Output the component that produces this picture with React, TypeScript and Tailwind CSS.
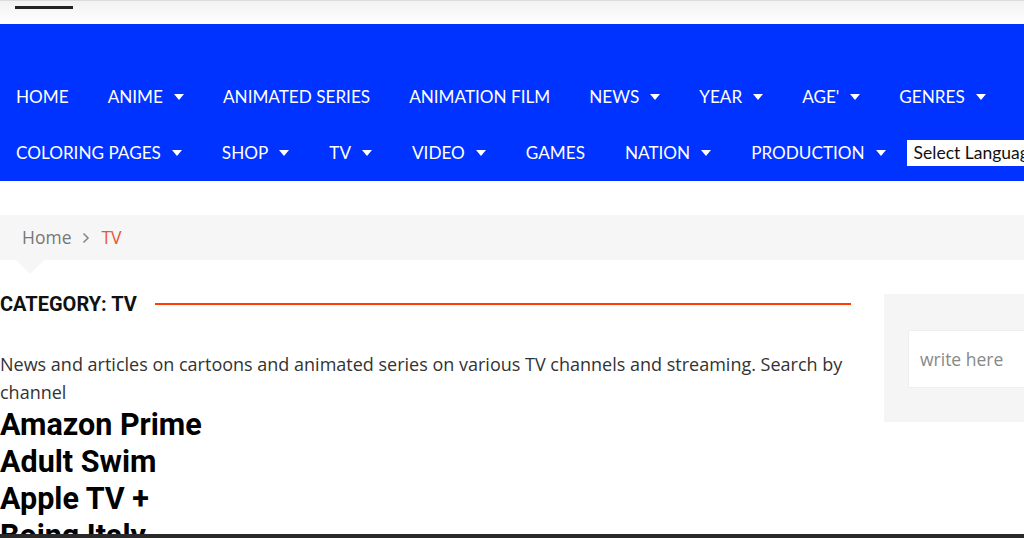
import React from 'react';

const row1 = [
  { label: 'HOME' },
  { label: 'ANIME', caret: true },
  { label: 'ANIMATED SERIES' },
  { label: 'ANIMATION FILM' },
  { label: 'NEWS', caret: true },
  { label: 'YEAR', caret: true },
  { label: "AGE'", caret: true },
  { label: 'GENRES', caret: true },
];

const row2 = [
  { label: 'COLORING PAGES', caret: true },
  { label: 'SHOP', caret: true },
  { label: 'TV', caret: true },
  { label: 'VIDEO', caret: true },
  { label: 'GAMES' },
  { label: 'NATION', caret: true },
  { label: 'PRODUCTION', caret: true },
];

const channels = ['Amazon Prime', 'Adult Swim', 'Apple TV +', 'Boing Italy', 'Cartoon Network'];

const Caret = () => (
  <svg width="10" height="6" viewBox="0 0 10 6" className="ml-[11px] shrink-0">
    <path d="M0 0 L10 0 L5 6 Z" fill="currentColor" />
  </svg>
);

const NavItem: React.FC<{ label: string; caret?: boolean }> = ({ label, caret }) => (
  <a className="flex items-center h-[56px] text-white text-[17.15px] whitespace-nowrap">
    {label}
    {caret && <Caret />}
  </a>
);

export default function App() {
  return (
    <div className="w-[1024px] h-[538px] overflow-hidden bg-white font-['Lato','Open_Sans',sans-serif]">
      {/* top strip */}
      <div className="h-[24px] border-t border-[#dcdcdc] bg-gradient-to-b from-[#f2f2f2] to-white">
        <div className="ml-[15px] mt-[5px] w-[58px] h-[3px] bg-[#222]" />
      </div>

      {/* main nav */}
      <nav className="bg-[#0033ff] pt-[45px] pl-[16px]">
        <div className="flex gap-x-[39px]">
          {row1.map((i) => (
            <NavItem key={i.label} {...i} />
          ))}
        </div>
        <div className="flex gap-x-[40px] items-center">
          {row2.map((i) => (
            <NavItem key={i.label} {...i} />
          ))}
          <div className="-ml-[19px] bg-white h-[26px] w-[200px] pl-[7px] flex items-center text-[17.5px] text-[#111] whitespace-nowrap">
            Select Language
          </div>
        </div>
      </nav>

      {/* breadcrumb */}
      <div className="mt-[34px] relative bg-[#f6f6f6] h-[45px] flex items-center pl-[22px] text-[17.5px] font-['Open_Sans',sans-serif]">
        <span className="text-[#777]">Home</span>
        <span className="mx-[11px]">
          <svg width="8" height="12" viewBox="0 0 8 12">
            <path d="M1.5 1.5 L6 6 L1.5 10.5" stroke="#888" strokeWidth="1.6" fill="none" />
          </svg>
        </span>
        <span className="text-[#e8553a]">TV</span>
        <div className="absolute left-[16px] top-full w-0 h-0 border-l-[14px] border-r-[14px] border-t-[14px] border-l-transparent border-r-transparent border-t-[#f6f6f6]" />
      </div>

      {/* content */}
      <div className="flex mt-[34px]">
        <main className="w-[851px] shrink-0">
          <div className="flex items-center h-[20px]">
            <h1 className="font-['Roboto',sans-serif] font-bold text-[20px] text-[#111] whitespace-nowrap">
              CATEGORY: TV
            </h1>
            <div className="ml-[18px] flex-1 h-[2px] bg-[#ff3d00]" />
          </div>
          <p className="mt-[36px] text-[18px] leading-[28px] text-[#333] pr-[2px] font-['Open_Sans',sans-serif]">
            News and articles on cartoons and animated series on various TV channels and streaming. Search by channel
          </p>
          <div className="font-['Roboto',sans-serif] font-bold text-[30.5px] leading-[37px] text-black">
            {channels.map((c) => (
              <h2 key={c}>{c}</h2>
            ))}
          </div>
        </main>
        <aside className="ml-[33px] w-[300px] shrink-0 self-start bg-[#f5f5f5] pt-[36px] pb-[34px] pl-[24px]">
          <div className="bg-white h-[58px] border border-[#eeeeee] flex items-center pl-[11px] text-[17.5px] text-[#888] font-['Open_Sans',sans-serif]">
            write here
          </div>
        </aside>
      </div>

      <div className="fixed left-0 bottom-0 w-full h-[4px] bg-[#2a2a2a]" />
    </div>
  );
}
